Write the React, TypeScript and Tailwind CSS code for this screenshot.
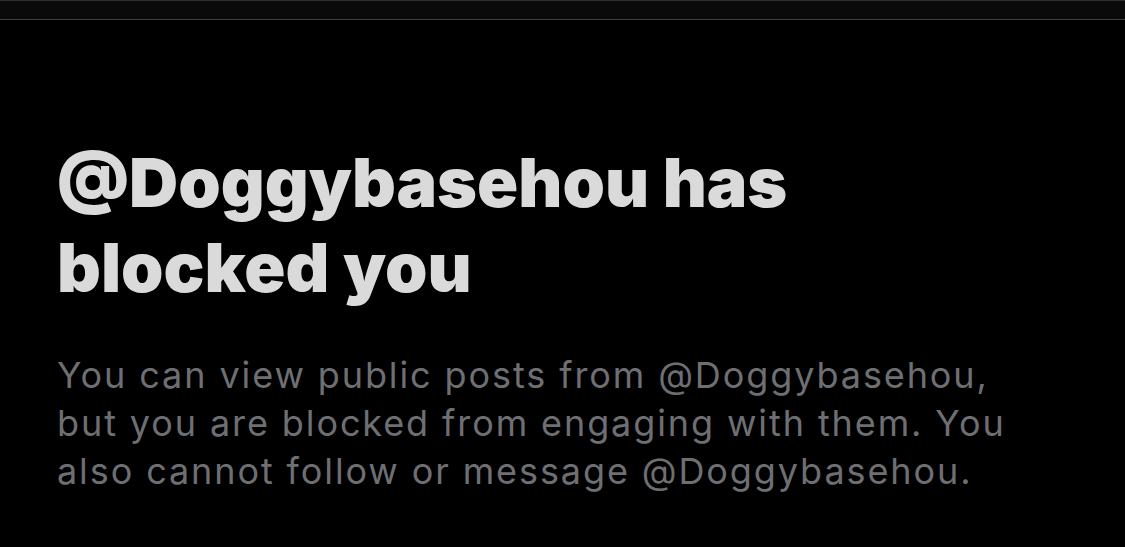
export default function App() {
  return (
    <div className="w-[1125px] h-[547px] bg-black overflow-hidden flex flex-col">
      {/* status strip */}
      <div className="h-[20px] bg-[#0a0a0b] border-t border-[#2f3033] border-b border-b-[#3c3d40]" />
      <div className="pl-[57px] pt-[120px] flex flex-col">
        <h1 className="text-[68px] leading-[85px] font-black text-[#dadada] tracking-[0px] font-['Inter',sans-serif]">
          @Doggybasehou has
          <br />
          blocked you
        </h1>
        <p className="mt-[41px] text-[36px] leading-[48px] text-[#6e6f73] tracking-[1.9px] font-['Inter',sans-serif]">
          You can view public posts from @Doggybasehou,
          <br />
          but you are blocked from engaging with them. You
          <br />
          also cannot follow or message @Doggybasehou.
        </p>
      </div>
    </div>
  );
}
